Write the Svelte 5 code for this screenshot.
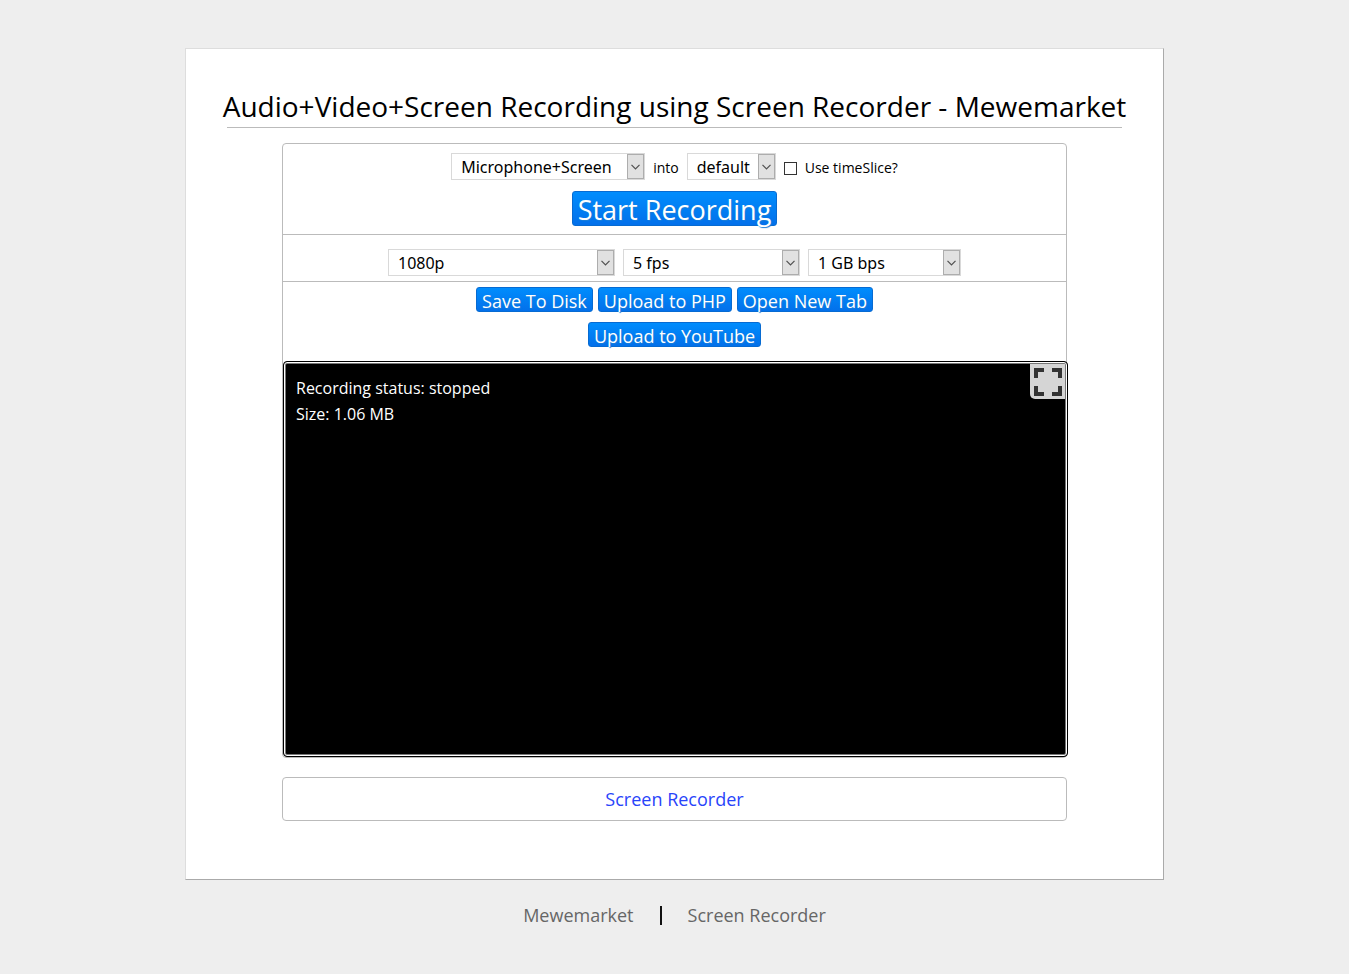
<script lang="ts">
	type Option = { label: string; width: 'wide' | 'medium' | 'small' };

	const quality: Option[] = [
		{ label: '1080p', width: 'wide' },
		{ label: '5 fps', width: 'medium' },
		{ label: '1 GB bps', width: 'small' }
	];

	const names = ['Resolution', 'Frame rate', 'Bitrate'];

	let status = $state('stopped');
	let size = $state('1.06 MB');
	let timeSlice = $state(false);
</script>

{#snippet dropdown(name: string, label: string, width: string)}
	<span class="dropdown {width}">
		<select aria-label={name}>
			<option>{label}</option>
		</select>
		<span class="arrow">
			<svg viewBox="0 0 9 6" width="9" height="6" aria-hidden="true">
				<path d="M0.5 0.8 4.5 4.8 8.5 0.8" fill="none" stroke="#505050" stroke-width="1.2" />
			</svg>
		</span>
	</span>
{/snippet}

<article>
	<h1>Audio+Video+Screen Recording using Screen Recorder - Mewemarket</h1>

	<section class="recorder">
		<div class="row source">
			<div class="line">
				{@render dropdown('Recording media', 'Microphone+Screen', 'media')}
				<span class="small-text">into</span>
				{@render dropdown('Container format', 'default', 'format')}
				<label class="small-text">
					<input type="checkbox" bind:checked={timeSlice} />
					Use timeSlice?
				</label>
			</div>
			<button class="start">Start Recording</button>
		</div>

		<div class="row quality">
			{#each quality as item, i}
				{@render dropdown(names[i], item.label, item.width)}
			{/each}
		</div>

		<div class="row actions">
			<button>Save To Disk</button>
			<button>Upload to PHP</button>
			<button>Open New Tab</button>
			<button>Upload to YouTube</button>
		</div>

		<div class="player">
			<p>Recording status: {status}</p>
			<p>Size: {size}</p>
			<button class="fullscreen" aria-label="Full screen">
				<svg viewBox="0 0 28 28" width="28" height="28" aria-hidden="true">
					<path
						d="M2 10V2H10M18 2H26V10M26 18V26H18M10 26H2V18"
						fill="none"
						stroke="#333"
						stroke-width="4"
					/>
				</svg>
			</button>
		</div>
	</section>

	<section class="more">
		<a href="#recorder">Screen Recorder</a>
	</section>
</article>

<footer>
	<a href="#home">Mewemarket</a>
	<span class="bar"></span>
	<a href="#recorder">Screen Recorder</a>
</footer>

<style>
	:global(body) {
		background: #eee;
		color: #000;
		font-family: 'Open Sans', 'Noto Sans', sans-serif;
		font-size: 18px;
		line-height: 26px;
	}

	article {
		box-sizing: border-box;
		max-width: 979px;
		margin: 48px auto 0;
		padding: 37px 41px 58px;
		background: #fff;
		border: 1px solid;
		border-color: #ddd #aaa #aaa #ddd;
	}

	h1 {
		display: flex;
		justify-content: center;
		margin: 0 0 15px;
		padding-bottom: 1px;
		border-bottom: 1px solid #bbb;
		font-size: 28px;
		font-weight: 400;
		line-height: 40px;
		white-space: nowrap;
	}

	.recorder,
	.more {
		box-sizing: border-box;
		max-width: 785px;
		margin: 0 auto;
		border: 1px solid #bbb;
		border-radius: 4px;
	}

	.row {
		display: flex;
		justify-content: center;
		border-bottom: 1px solid #bbb;
	}

	.source {
		flex-direction: column;
		align-items: center;
		gap: 11px;
		padding: 9px 0 8px;
	}

	.line {
		display: flex;
		align-items: center;
		gap: 8px;
	}

	.quality {
		gap: 8px;
		padding: 14px 0 5px;
	}

	.actions {
		flex-wrap: wrap;
		gap: 10px 5px;
		padding: 5px 190px 14px;
		border-bottom: 0;
	}

	.small-text {
		padding-top: 3px;
		font-size: 14px;
		line-height: 24px;
	}

	label {
		display: flex;
		align-items: center;
		gap: 8px;
	}

	input {
		appearance: none;
		box-sizing: border-box;
		width: 13px;
		height: 13px;
		margin: 0;
		background: #fff;
		border: 1px solid #333;
	}

	input:checked {
		background: #333;
	}

	.dropdown {
		display: grid;
		height: 27px;
	}

	.dropdown > * {
		grid-area: 1 / 1;
	}

	.media {
		width: 194px;
	}
	.format {
		width: 89px;
	}
	.wide {
		width: 227px;
	}
	.medium {
		width: 177px;
	}
	.small {
		width: 153px;
	}

	select {
		appearance: none;
		box-sizing: border-box;
		width: 100%;
		height: 27px;
		margin: 0;
		padding: 0 18px 0 9px;
		color: #000;
		background: #fff;
		border: 1px solid #d9d9d9;
		border-radius: 0;
		font-family: 'Noto Sans', 'Open Sans', sans-serif;
		font-size: 16px;
	}

	.arrow {
		display: flex;
		align-items: center;
		justify-content: center;
		box-sizing: border-box;
		width: 17px;
		height: 25px;
		margin: 1px;
		justify-self: end;
		background: #e1e1e1;
		border: 1px solid #adadad;
		pointer-events: none;
	}

	button {
		box-sizing: border-box;
		height: 25px;
		padding: 0 5px;
		color: #fff;
		background: linear-gradient(#008dfd, #0370ea);
		border: 1px solid #076bd2;
		border-radius: 3px;
		font-family: inherit;
		font-size: 18px;
		line-height: 26px;
		text-shadow: 1px 1px 1px #1b7fd8;
	}

	.start {
		height: 35px;
		font-size: 27px;
		line-height: 36px;
	}

	/* black frame, white line and grey line around the picture */
	.player {
		position: relative;
		box-sizing: border-box;
		height: 396px;
		margin-right: -2px;
		padding: 13px 12px;
		color: #fff;
		background: #000;
		border: 1px solid #000;
		border-radius: 4px;
		box-shadow:
			inset 0 0 0 1px #fff,
			inset 0 0 0 2px #777;
		font-size: 16px;
	}

	p {
		margin: 0;
	}

	.fullscreen {
		position: absolute;
		top: 2px;
		right: 2px;
		display: flex;
		align-items: center;
		justify-content: center;
		width: 35px;
		height: 35px;
		padding: 0;
		background: #d5d5d5;
		border: 0;
		border-radius: 0 0 0 5px;
	}

	.more {
		margin-top: 19px;
		padding: 8px 0;
		text-align: center;
	}

	a {
		color: #2844fa;
		text-decoration: none;
	}

	footer {
		display: flex;
		align-items: center;
		justify-content: center;
		gap: 26px;
		padding: 22px 0;
	}

	footer a {
		color: #666;
	}

	.bar {
		width: 2px;
		height: 19px;
		background: #111;
	}
</style>
